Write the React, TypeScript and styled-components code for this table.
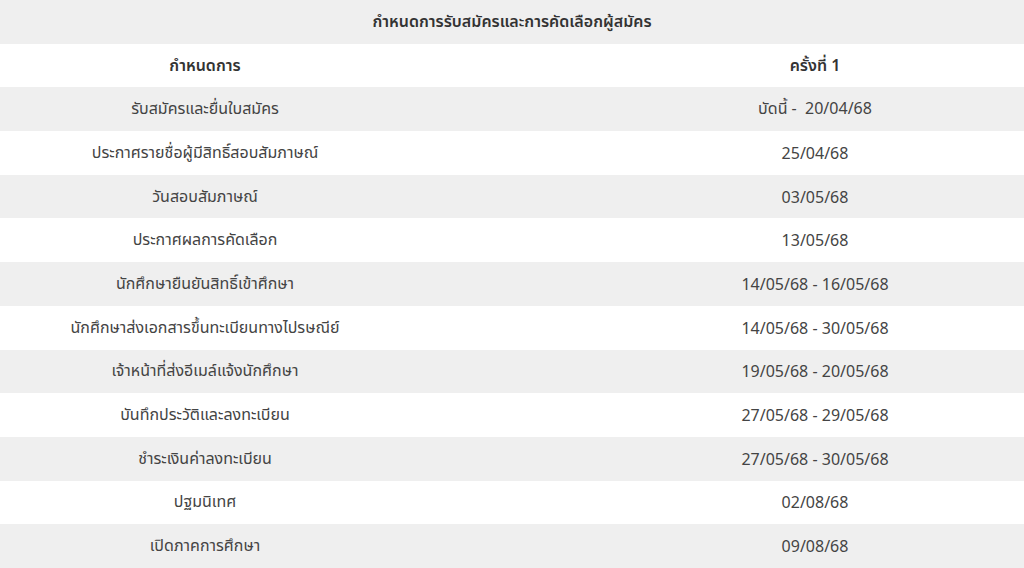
import React from 'react';
import styled, { createGlobalStyle } from 'styled-components';

type Row = { label: string, date: string }

const rows: Row[] = [
    { label: 'รับสมัครและยื่นใบสมัคร', date: 'บัดนี้ -  20/04/68' },
    { label: 'ประกาศรายชื่อผู้มีสิทธิ์สอบสัมภาษณ์', date: '25/04/68' },
    { label: 'วันสอบสัมภาษณ์', date: '03/05/68' },
    { label: 'ประกาศผลการคัดเลือก', date: '13/05/68' },
    { label: 'นักศึกษายืนยันสิทธิ์เข้าศึกษา', date: '14/05/68 - 16/05/68' },
    { label: 'นักศึกษาส่งเอกสารขึ้นทะเบียนทางไปรษณีย์', date: '14/05/68 - 30/05/68' },
    { label: 'เจ้าหน้าที่ส่งอีเมล์แจ้งนักศึกษา', date: '19/05/68 - 20/05/68' },
    { label: 'บันทึกประวัติและลงทะเบียน', date: '27/05/68 - 29/05/68' },
    { label: 'ชำระเงินค่าลงทะเบียน', date: '27/05/68 - 30/05/68' },
    { label: 'ปฐมนิเทศ', date: '02/08/68' },
    { label: 'เปิดภาคการศึกษา', date: '09/08/68' },
];

const GlobalStyle = createGlobalStyle`
    html, body {
        margin: 0;
        padding: 0;
        background: #fff;
    }
    body {
        font-family: "Noto Sans", "Noto Sans Thai", "DejaVu Sans", sans-serif;
        color: #444;
    }
`;

const Table = styled.div`
    width: 1024px;
    display: grid;
    grid-template-columns: 410px 1fr;
`;

const Caption = styled.div`
    grid-column: 1 / -1;
    height: 43.7px;
    display: flex;
    align-items: center;
    justify-content: center;
    background: #efefef;
    font-size: 16px;
    font-weight: 600;
    color: #333;
`;

const Cell = styled.div<{ $shade: boolean, $head?: boolean, $date?: boolean }>`
    height: 43.7px;
    display: flex;
    align-items: center;
    justify-content: center;
    padding-left: ${({ $date }) => $date ? '196px' : '0'};
    background: ${({ $shade }) => $shade ? '#efefef' : '#fff'};
    font-size: 16px;
    font-weight: ${({ $head }) => $head ? 600 : 400};
    color: ${({ $head }) => $head ? '#333' : '#444'};
    white-space: pre;
`;

const App = () => {
    return <>
        <GlobalStyle />
        <Table>
            <Caption>กำหนดการรับสมัครและการคัดเลือกผู้สมัคร</Caption>
            <Cell $shade={false} $head>กำหนดการ</Cell>
            <Cell $shade={false} $head $date>ครั้งที่ 1</Cell>
            {rows.map(({ label, date }, i) => <React.Fragment key={label}>
                <Cell $shade={i % 2 === 0}>{label}</Cell>
                <Cell $shade={i % 2 === 0} $date>{date}</Cell>
            </React.Fragment>)}
        </Table>
    </>
}

export default App;
